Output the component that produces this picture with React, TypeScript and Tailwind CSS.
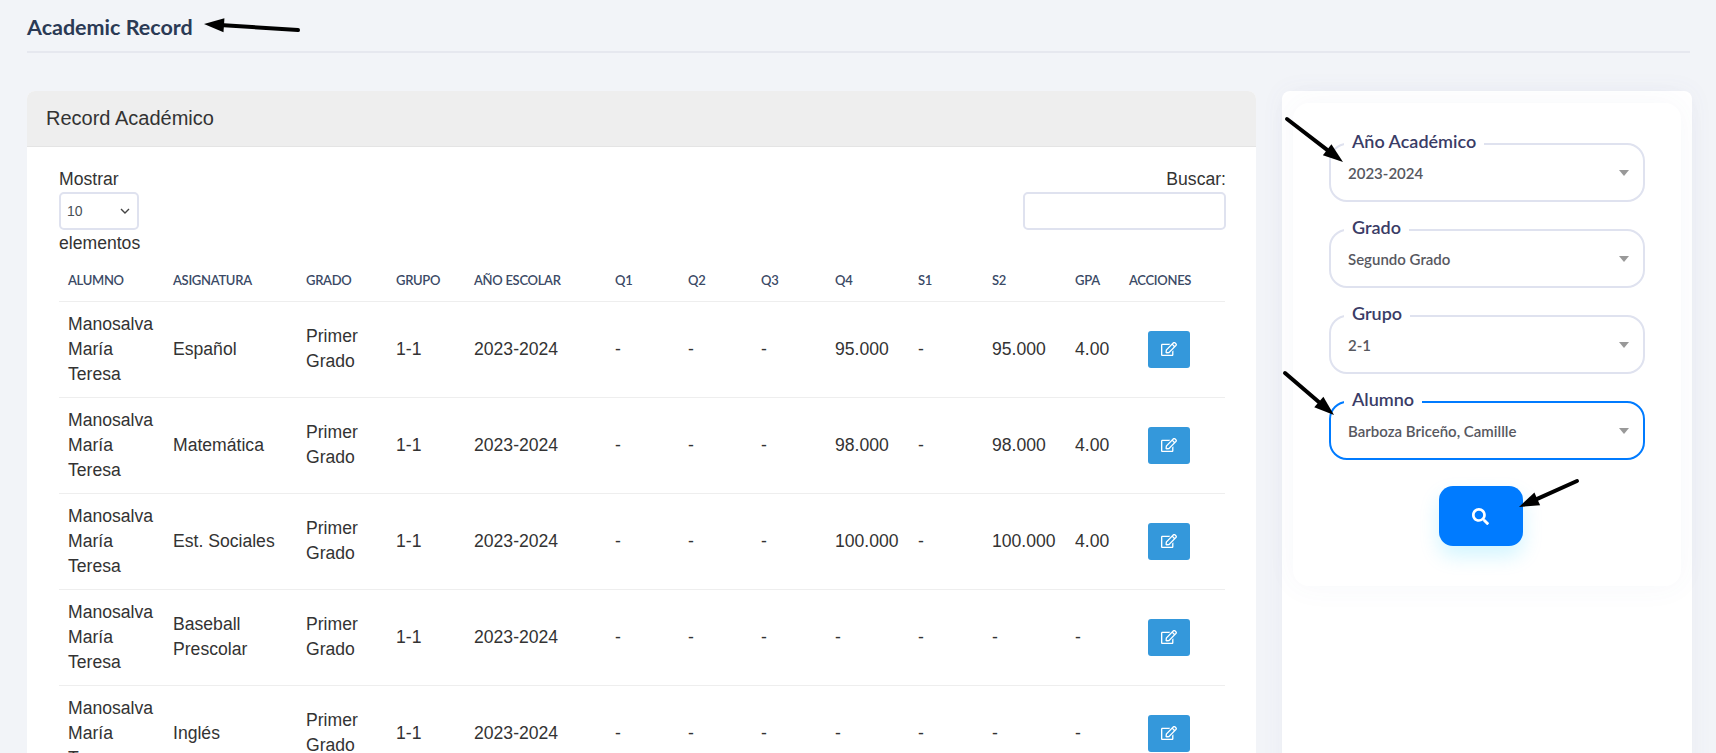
import { FaRegEdit, FaSearch } from "react-icons/fa";

const subjects = [
  { subject: ["Español"], q4: "95.000", s2: "95.000", gpa: "4.00" },
  { subject: ["Matemática"], q4: "98.000", s2: "98.000", gpa: "4.00" },
  { subject: ["Est. Sociales"], q4: "100.000", s2: "100.000", gpa: "4.00" },
  { subject: ["Baseball", "Prescolar"], q4: "-", s2: "-", gpa: "-" },
  { subject: ["Inglés"], q4: "-", s2: "-", gpa: "-" },
];

const columns = [
  { name: "Alumno", width: "w-[105px]" },
  { name: "Asignatura", width: "w-[133px]" },
  { name: "Grado", width: "w-[90px]" },
  { name: "Grupo", width: "w-[78px]" },
  { name: "Año Escolar", width: "w-[141px]" },
  { name: "Q1", width: "w-[73px]" },
  { name: "Q2", width: "w-[73px]" },
  { name: "Q3", width: "w-[74px]" },
  { name: "Q4", width: "w-[83px]" },
  { name: "S1", width: "w-[74px]" },
  { name: "S2", width: "w-[83px]" },
  { name: "GPA", width: "w-[54px]" },
  { name: "Acciones", width: "w-[105px]" },
];

function Arrow({ x1, y1, x2, y2 }: { x1: number; y1: number; x2: number; y2: number }) {
  const angle = Math.atan2(y2 - y1, x2 - x1);
  const ux = Math.cos(angle);
  const uy = Math.sin(angle);
  const baseX = x2 - ux * 20;
  const baseY = y2 - uy * 20;
  const head = `${x2},${y2} ${baseX - uy * 7},${baseY + ux * 7} ${baseX + uy * 7},${baseY - ux * 7}`;
  return (
    <g>
      <line x1={x1} y1={y1} x2={baseX} y2={baseY} stroke="#000" strokeWidth="4" strokeLinecap="round" />
      <polygon points={head} fill="#000" />
    </g>
  );
}

function SelectField({ label, value, active }: { label: string; value: string; active?: boolean }) {
  return (
    <fieldset
      className={`h-[69px] rounded-[18px] border-2 pr-[14px] pl-[17px] ${
        active ? "border-[#007bff]" : "border-[#dfe2ef]"
      }`}
    >
      <legend className="relative -top-[3px] -ml-[4px] px-[8px] text-[18px] leading-[22px] font-semibold text-[#3a3c66]">
        {label}
      </legend>
      <div className="flex h-[36px] items-center justify-between text-[15px] font-semibold text-[#57585f]">
        <span>{value}</span>
        <span className="h-0 w-0 border-x-[5.5px] border-t-[6px] border-x-transparent border-t-[#999999]" />
      </div>
    </fieldset>
  );
}

export default function App() {
  return (
    <div className="relative h-screen overflow-hidden bg-[#f2f4f8] font-['Liberation_Sans',Arial,sans-serif] text-[17.6px] leading-[25px] text-[#333333]">
      <div className="mr-[26px] ml-[27px] h-[53px] border-b-2 border-[#e6e8ef] pt-[14px]">
        <h1 className="font-['Lato',sans-serif] text-[21.5px] leading-[26px] font-bold text-[#2b3a55]">
          Academic Record
        </h1>
      </div>

      <div className="mt-[38px] flex items-start pl-[27px]">
        {/* Table card */}
        <div className="h-[700px] w-[1229px] shrink-0 rounded-t-lg bg-white">
          <div className="h-[56px] rounded-t-lg border-b border-[#e4e4e4] bg-[#eeeeee] pt-[14px] pl-[19px] text-[20px] leading-[26px] text-[#333333]">
            Record Académico
          </div>
          <div className="pt-[20px] pr-[30px] pl-[32px]">
            <div className="flex justify-between">
              <div>
                <div>Mostrar</div>
                <div className="flex h-[38px] w-[80px] items-center justify-between rounded-[5px] border-2 border-[#dfe2ef] pr-[7px] pl-[6px] text-[14px] text-[#495057]">
                  <span>10</span>
                  <svg width="10" height="6" viewBox="0 0 10 6" fill="none" stroke="#444" strokeWidth="1.4">
                    <path d="M1 1l4 4 4-4" />
                  </svg>
                </div>
                <div className="mt-px">elementos</div>
              </div>
              <div className="flex flex-col items-end">
                <div>Buscar:</div>
                <input className="h-[38px] w-[203px] rounded-[5px] border-2 border-[#dfe2ef] bg-white" />
              </div>
            </div>

            <table className="mt-[5px] w-[1166px] table-fixed border-collapse">
              <thead>
                <tr className="border-b border-[#eeeeee]">
                  {columns.map((col) => (
                    <th
                      key={col.name}
                      className={`${col.width} h-[40px] px-[9px] text-left font-['Lato',sans-serif] text-[13px] font-semibold tracking-[-0.3px] whitespace-nowrap text-[#3b4a66] uppercase`}
                    >
                      {col.name}
                    </th>
                  ))}
                </tr>
              </thead>
              <tbody>
                {subjects.map((row) => (
                  <tr key={row.subject[0]} className="h-[96px] border-b border-[#eeeeee]">
                    <td className="px-[9px]">
                      Manosalva
                      <br />
                      María
                      <br />
                      Teresa
                    </td>
                    <td className="px-[9px]">
                      {row.subject.map((line) => (
                        <div key={line}>{line}</div>
                      ))}
                    </td>
                    <td className="px-[9px]">
                      Primer
                      <br />
                      Grado
                    </td>
                    <td className="px-[9px]">1-1</td>
                    <td className="px-[9px]">2023-2024</td>
                    <td className="px-[9px]">-</td>
                    <td className="px-[9px]">-</td>
                    <td className="px-[9px]">-</td>
                    <td className="px-[9px] whitespace-nowrap">{row.q4}</td>
                    <td className="px-[9px]">-</td>
                    <td className="px-[9px] whitespace-nowrap">{row.s2}</td>
                    <td className="px-[9px]">{row.gpa}</td>
                    <td className="pl-[28px]">
                      <button className="flex h-[37px] w-[42px] items-center justify-center rounded-[3px] bg-[#3498db] text-white">
                        <FaRegEdit size={16} />
                      </button>
                    </td>
                  </tr>
                ))}
              </tbody>
            </table>
          </div>
        </div>

        {/* Filter card */}
        <div className="ml-[26px] h-[700px] w-[410px] shrink-0 rounded-t-lg bg-white px-[11px] pt-[12px] font-['Lato',sans-serif] shadow-[0_0_24px_rgba(90,100,150,0.05)]">
          <div className="h-[483px] rounded-[16px] bg-white px-[36px] pt-[30px] shadow-[0_0_30px_rgba(80,90,150,0.05)]">
            <div className="flex flex-col gap-[17px]">
              <SelectField label="Año Académico" value="2023-2024" />
              <SelectField label="Grado" value="Segundo Grado" />
              <SelectField label="Grupo" value="2-1" />
              <SelectField label="Alumno" value="Barboza Briceño, Camillle" active />
            </div>
            <div className="mt-[26px] flex justify-center pr-[13px]">
              <button className="flex h-[60px] w-[84px] items-center justify-center rounded-[14px] bg-[#007bff] text-white shadow-[0_10px_20px_rgba(0,200,255,0.18)]">
                <FaSearch size={17} />
              </button>
            </div>
          </div>
        </div>
      </div>

      {/* Annotation arrows drawn over the screenshot */}
      <svg className="pointer-events-none absolute inset-0" width="1716" height="753">
        <Arrow x1={298} y1={30} x2={204} y2={24} />
        <Arrow x1={1287} y1={119} x2={1343} y2={162} />
        <Arrow x1={1285} y1={373} x2={1334} y2={415} />
        <Arrow x1={1577} y1={481} x2={1519} y2={507} />
      </svg>
    </div>
  );
}
